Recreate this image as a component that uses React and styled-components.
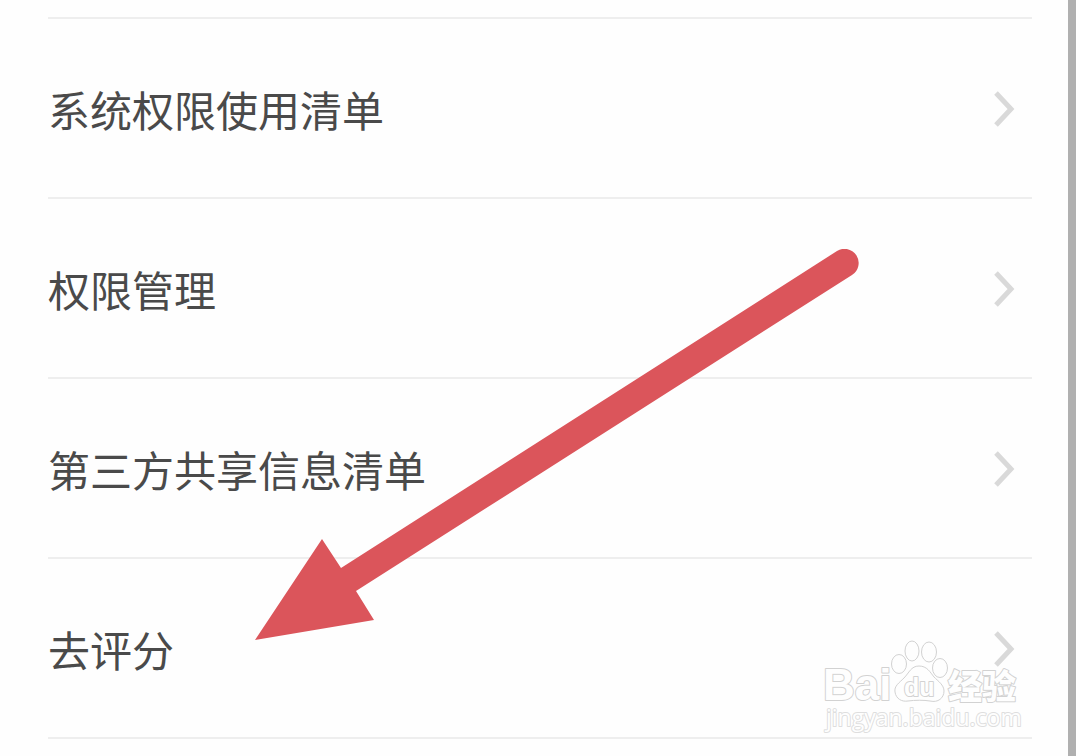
import React from 'react';
import styled, { createGlobalStyle } from 'styled-components';

const GlobalStyle = createGlobalStyle`
  body {
    margin: 0;
    background-color: #fefefe;
    font-family: "Noto Sans CJK SC", "Liberation Sans", sans-serif;
  }
`;

const Page = styled.main`
  position: relative;
  box-sizing: border-box;
  min-height: 100vh;
  padding: 17px 36px 0 48px;
  border-right: 8px solid #b0b0b0;
  overflow: hidden;
`;

const List = styled.ul`
  list-style: none;
  margin: 0;
  padding: 0;
  border-top: 2px solid #eeeeee;
`;

const Item = styled.li`
  border-bottom: 2px solid #eeeeee;
`;

const RowLink = styled.a`
  display: flex;
  align-items: center;
  justify-content: space-between;
  padding: 60px 16px 58px 0;
  color: #4a4a4a;
  font-size: 42px;
  line-height: 60px;
  text-decoration: none;
`;

const Chevron = styled.svg`
  flex: none;
  width: 22px;
  height: 36px;
  fill: none;
  stroke: #d9d9d9;
  stroke-width: 5;
`;

const Arrow = styled.svg`
  position: absolute;
  left: 255px;
  top: 249px;
  width: 604px;
  height: 392px;
  fill: #db555b;
  pointer-events: none;
`;

const Watermark = styled.svg`
  position: absolute;
  right: 44px;
  top: 636px;
  width: 204px;
  height: 100px;
  pointer-events: none;
  fill: #fefefe;
  stroke: #d2d2d2;
  stroke-width: 1;

  text {
    paint-order: stroke;
    stroke-width: 2;
    stroke-linejoin: round;
  }
`;

const BrandText = styled.text`
  font-family: "Liberation Sans", sans-serif;
  font-size: ${props => props.$size}px;
  font-weight: bold;
`;

const BrandCjk = styled.text`
  font-family: "Noto Sans CJK SC", sans-serif;
  font-size: 34px;
  font-weight: 900;
`;

const SiteText = styled.text`
  font-family: "Open Sans", sans-serif;
  font-size: 23px;
  stroke: #dedede;
`;

const items = ['系统权限使用清单', '权限管理', '第三方共享信息清单', '去评分'];

const Row = ({ label }) => (
  <Item>
    <RowLink href="#">
      {label}
      <Chevron viewBox="0 0 22 36" aria-hidden="true">
        <path d="M2 2 L17 18 L2 34" />
      </Chevron>
    </RowLink>
  </Item>
);

const BaiduMark = () => (
  <Watermark viewBox="0 0 204 100">
    <BrandText x="3" y="64" $size={44}>Bai</BrandText>
    <ellipse cx="79" cy="28" rx="7.5" ry="9.5" />
    <ellipse cx="92" cy="15" rx="7" ry="10" />
    <ellipse cx="109" cy="16" rx="7.5" ry="10" />
    <ellipse cx="120" cy="32" rx="7.5" ry="9.5" />
    <path d="M99 30 C91 30 89 37 84 42 C79 47 74 50 75 56 C76 63 82 66 88 65 C95 64 104 64 110 65 C118 67 124 62 124 55 C124 49 118 45 114 41 C110 36 107 30 99 30 Z" />
    <BrandText x="84" y="60" $size={25}>du</BrandText>
    <BrandCjk x="128" y="63">经验</BrandCjk>
    <SiteText x="6" y="90">jingyan.baidu.com</SiteText>
  </Watermark>
);

const App = () => (
  <>
    <GlobalStyle />
    <Page>
      <List>
        {items.map(label => (
          <Row key={label} label={label} />
        ))}
      </List>
      <BaiduMark />
      <Arrow viewBox="0 0 604 392" aria-hidden="true">
        <path d="M0 391 L67 290 L86 319 L582 2 A14 14 0 0 1 597 26 L101 342 L119 371 Z" />
      </Arrow>
    </Page>
  </>
);

export default App;
